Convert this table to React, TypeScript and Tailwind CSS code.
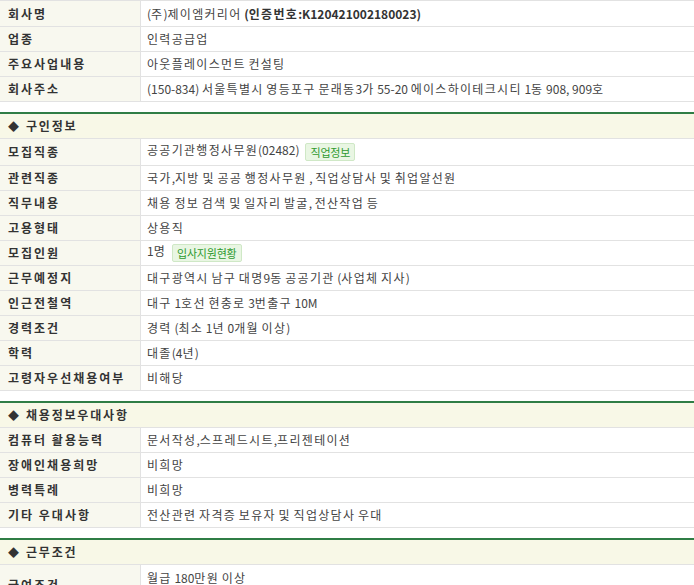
import React from "react";

const FONT = { fontFamily: '"Noto Sans CJK KR", "Noto Sans", sans-serif' };

function T({ s }: { s: string }) {
  const parts = s.split(/([\uAC00-\uD7A3]+)/);
  return (
    <>
      {parts.map((p, i) =>
        p === "" ? null : /[\uAC00-\uD7A3]/.test(p) ? (
          <span key={i} className="tracking-[1.3px]">
            {p}
          </span>
        ) : (
          <span key={i} className="tracking-normal">
            {p}
          </span>
        )
      )}
    </>
  );
}

type Row = { label: string; value: React.ReactNode; h?: string };

function Badge({ children }: { children: React.ReactNode }) {
  return (
    <span className="ml-[6px] inline-flex h-[18px] items-center rounded-[2px] border border-[#cfe8c6] bg-[#e9f6e3] px-[4px] align-middle text-[11px] leading-none tracking-[-0.2px] text-[#2f9a2f]">
      {children}
    </span>
  );
}

function Rows({ rows }: { rows: Row[] }) {
  return (
    <div>
      {rows.map((r, i) => (
        <div
          key={i}
          className={`grid grid-cols-[141px_1fr] border-b border-[#e2e2e2] ${r.h ?? "h-[25px]"}`}
        >
          <div className="flex items-center border-r border-[#e2e2e2] bg-[#f8f8ef] pl-[8px] text-[12px] font-bold leading-none tracking-[2px] text-[#333]">
            {r.label}
          </div>
          <div className="flex items-center pl-[6px] text-[12px] leading-none text-[#444]">
            <span>{typeof r.value === "string" ? <T s={r.value} /> : r.value}</span>
          </div>
        </div>
      ))}
    </div>
  );
}

function Header({ title }: { title: string }) {
  return (
    <div className="mt-[10px] border-t-2 border-[#2f7d45]">
      <div className="flex h-[25px] items-center border-b border-[#e2e2e2] bg-[#f8f8e7] pl-[8px] text-[12px] font-bold leading-none tracking-[1.8px] text-[#333]">
        <span className="mr-[7px] text-[11px] tracking-normal">◆</span>
        {title}
      </div>
    </div>
  );
}

export default function App() {
  const sec1: Row[] = [
    {
      label: "회사명",
      h: "h-[26px]",
      value: (
        <>
          <T s="(주)제이엠커리어 " />
          <b className="font-bold text-[#333]">
            <T s="(인증번호:K120421002180023)" />
          </b>
        </>
      ),
    },
    { label: "업종", value: "인력공급업" },
    { label: "주요사업내용", value: "아웃플레이스먼트 컨설팅" },
    {
      label: "회사주소",
      value: "(150-834) 서울특별시 영등포구 문래동3가 55-20 에이스하이테크시티 1동 908, 909호",
    },
  ];
  const sec2: Row[] = [
    {
      label: "모집직종",
      h: "h-[27px]",
      value: (
        <>
          <T s="공공기관행정사무원(02482)" />
          <Badge>직업정보</Badge>
        </>
      ),
    },
    { label: "관련직종", value: "국가,지방 및 공공 행정사무원 , 직업상담사 및 취업알선원" },
    { label: "직무내용", value: "채용 정보 검색 및 일자리 발굴, 전산작업 등" },
    { label: "고용형태", value: "상용직" },
    {
      label: "모집인원",
      value: (
        <>
          <T s="1명" />
          <Badge>입사지원현황</Badge>
        </>
      ),
    },
    { label: "근무예정지", value: "대구광역시 남구 대명9동 공공기관 (사업체 지사)" },
    { label: "인근전철역", value: "대구 1호선 현충로 3번출구 10M" },
    { label: "경력조건", value: "경력 (최소 1년 0개월 이상)" },
    { label: "학력", value: "대졸(4년)" },
    { label: "고령자우선채용여부", value: "비해당" },
  ];
  const sec3: Row[] = [
    { label: "컴퓨터 활용능력", value: "문서작성,스프레드시트,프리젠테이션" },
    { label: "장애인채용희망", value: "비희망" },
    { label: "병력특례", value: "비희망" },
    { label: "기타 우대사항", value: "전산관련 자격증 보유자 및 직업상담사 우대" },
  ];
  const sec4: Row[] = [
    {
      label: "급여조건",
      h: "h-[41px]",
      value: (
        <span className="flex flex-col gap-[4px] pt-[2px]">
          <span>
            <T s="월급 180만원 이상" />
          </span>
          <span>
            <T s="퇴직금 : 별도 지급" />
          </span>
        </span>
      ),
    },
  ];

  return (
    <div className="h-[585px] w-[694px] overflow-hidden bg-white" style={FONT}>
      <div className="border-t border-[#e2e2e2]">
        <Rows rows={sec1} />
      </div>
      <Header title="구인정보" />
      <Rows rows={sec2} />
      <Header title="채용정보우대사항" />
      <Rows rows={sec3} />
      <Header title="근무조건" />
      <Rows rows={sec4} />
    </div>
  );
}
